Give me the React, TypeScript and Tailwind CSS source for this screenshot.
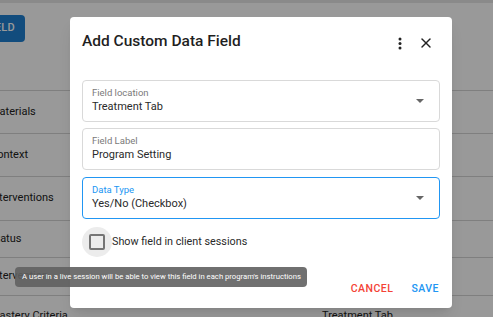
import { X } from "lucide-react";

const rows = [
  { h: "h-[43px]", text: "Materials" },
  { h: "h-[43px]", text: "Context" },
  { h: "h-[44px]", text: "Interventions" },
  { h: "h-[37px]", text: "Status" },
  { h: "h-[38px]", text: "Intervention" },
];

const Caret = () => (
  <svg width="8" height="4" viewBox="0 0 8 4" className="shrink-0">
    <path d="M0 0h8L4 4z" fill="#666" />
  </svg>
);

type FieldProps = {
  label: string;
  value: string;
  focused?: boolean;
  select?: boolean;
};

const Field = ({ label, value, focused, select }: FieldProps) => (
  <div
    className={`h-[42px] rounded-[4px] border flex items-center pl-[9px] pr-[15px] ${
      focused ? "border-[#2196f3] border-[1.5px]" : "border-[#d9d9d9]"
    }`}
  >
    <div className="flex-1 flex flex-col">
      <span
        className={`text-[9.5px] leading-[12px] ${focused ? "text-[#2196f3]" : "text-[#7a7a7a]"}`}
      >
        {label}
      </span>
      <span className="text-[11px] leading-[16px] text-[#2a2a2a]">{value}</span>
    </div>
    {select && <Caret />}
  </div>
);

export default function App() {
  return (
    <div className="relative w-[493px] h-[317px] overflow-hidden bg-white font-['Roboto',sans-serif]">
      {/* page underneath */}
      <div className="h-[3px] bg-[#e6e6e6]" />
      <div className="h-[87px] pt-[12px]">
        <div className="ml-[-70px] w-[95px] h-[27px] rounded-[4px] bg-[#1f7fd0] flex items-center justify-end pr-[10px] text-white text-[11px] font-medium tracking-[0.3px]">
          FIELD
        </div>
      </div>
      {rows.map((r) => (
        <div
          key={r.text}
          className={`${r.h} border-t border-[#d4d4d4] flex items-center ml-[-10px] text-[11px] text-[#222]`}
        >
          {r.text}
        </div>
      ))}
      <div className="h-[30px] border-t border-[#d4d4d4] flex items-end text-[11px] text-[#222]">
        <span className="ml-[-10px] w-[332px] -translate-y-[1px]">Mastery Criteria</span>
        <span className="-translate-y-[1px]">Treatment Tab</span>
      </div>

      {/* backdrop */}
      <div className="absolute inset-0 bg-black/40" />

      {/* dialog */}
      <div className="absolute left-[70px] top-[17px] w-[382px] h-[291px] bg-white rounded-[4px] shadow-lg flex flex-col px-[12px]">
        <div className="h-[48px] flex items-center mt-[1px]">
          <h2 className="flex-1 text-[15.5px] font-medium text-[#1f1f1f]">
            Add Custom Data Field
          </h2>
          <svg width="4" height="13" viewBox="0 0 4 13" className="mr-[16px] mt-[2px]">
            <circle cx="2" cy="2" r="1.5" fill="#222" />
            <circle cx="2" cy="6.5" r="1.5" fill="#222" />
            <circle cx="2" cy="11" r="1.5" fill="#222" />
          </svg>
          <X size={16} strokeWidth={2.2} className="text-[#222] mr-[6px] mt-[2px]" />
        </div>
        <div className="mt-[14px] flex flex-col gap-[6px]">
          <Field label="Field location" value="Treatment Tab" select />
          <Field label="Field Label" value="Program Setting" />
          <div className="mt-[1px]">
            <Field label="Data Type" value="Yes/No (Checkbox)" focused select />
          </div>
        </div>
        <div className="mt-[8px] flex items-center">
          <div className="w-[30px] h-[30px] rounded-full bg-[#ececec] flex items-center justify-center">
            <div className="w-[16px] h-[16px] rounded-[2px] border-2 border-[#757575]" />
          </div>
          <span className="text-[10.8px] text-[#2a2a2a]">Show field in client sessions</span>
        </div>
        <div className="mt-auto mb-[11px] flex justify-end gap-[18px] text-[10.5px] font-medium tracking-[0.5px] pr-[1px]">
          <span className="text-[#f44336]">CANCEL</span>
          <span className="text-[#2196f3]">SAVE</span>
        </div>
      </div>

      {/* tooltip */}
      <div className="absolute left-[15px] top-[267px] w-[292px] h-[20px] rounded-[4px] bg-[#616161]/90 flex items-center px-[7px] text-white text-[7.7px] whitespace-nowrap">
        A user in a live session will be able to view this field in each program's instructions
      </div>
    </div>
  );
}
